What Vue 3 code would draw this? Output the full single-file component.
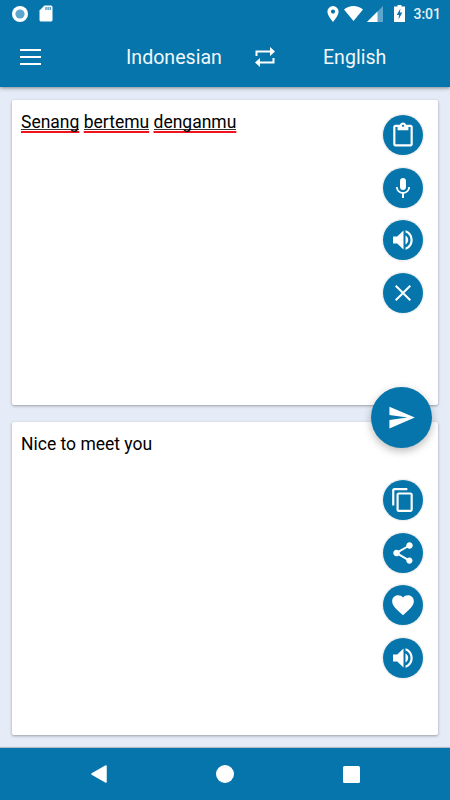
<template>
  <div class="screen">
    <header class="appbar">
      <div class="status">
        <div class="status-left">
          <svg class="rec" width="16" height="16" viewBox="0 0 16 16">
            <circle cx="8" cy="8" r="8" fill="#fff" />
            <circle cx="8" cy="8" r="4.6" fill="#5da6cc" />
          </svg>
          <svg width="14" height="17" viewBox="0 0 14 17">
            <path d="M5.500 0.500H12a1.500 1.500 0 0 1 1.500 1.500v13a1.500 1.500 0 0 1-1.500 1.500H2A1.500 1.500 0 0 1 .5 15V5.500z" fill="#fff" />
            <path d="M6.500 2h1v3h-1zM8.600 2h1v3h-1zM10.700 2h1v3h-1z" fill="#0575ab" />
          </svg>
        </div>
        <div class="status-right">
          <svg width="12" height="16" viewBox="0 0 12 16">
            <path d="M6 0a5.600 5.600 0 0 0-5.600 5.600C.4 9.800 6 16 6 16s5.600-6.200 5.600-10.400A5.600 5.600 0 0 0 6 0zm0 7.700a2.100 2.100 0 1 1 0-4.200 2.100 2.100 0 0 1 0 4.200z" fill="#fff" />
          </svg>
          <svg class="wifi" width="19" height="15" viewBox="0 0 19 15">
            <path d="M9.500 15L0 3.600C2.600 1.400 5.900 0 9.500 0s6.900 1.400 9.500 3.600z" fill="#fff" />
          </svg>
          <svg class="signal" width="16" height="16" viewBox="0 0 16 16">
            <path d="M0 16L16 0v16z" fill="#5da6cc" />
            <path d="M0 16L10.500 5.500V16z" fill="#fff" />
          </svg>
          <svg class="battery" width="11" height="17" viewBox="0 0 11 17">
            <path d="M3.500 0h4v1.500H11V17H0V1.500h3.500z" fill="#fff" />
            <path d="M6.400 3.600L2.800 10h2.300l-.6 4.400L8.300 7.600H5.900z" fill="#0575ab" />
          </svg>
          <span class="clock">3:01</span>
        </div>
      </div>
      <div class="toolbar">
        <svg class="menu" width="22" height="16" viewBox="0 0 22 16">
          <path d="M0 1h21M0 8h21M0 15h21" stroke="#fff" stroke-width="2" fill="none" />
        </svg>
        <span class="lang lang-from">Indonesian</span>
        <svg class="swap" width="20" height="22" viewBox="0 0 20 22">
          <path d="M1.500 10V5.500h14.500M18.500 12v4.500H4" stroke="#fff" stroke-width="2" fill="none" />
          <path d="M15 1l5 4.500-5 4.500zM5 12l-5 4.500 5 4.500z" fill="#fff" />
        </svg>
        <span class="lang lang-to">English</span>
      </div>
    </header>

    <main class="content">
      <section class="card card-source">
        <p class="text"><span class="misspelled">Senang</span> <span class="misspelled">bertemu</span> <span class="misspelled">denganmu</span></p>
        <div class="actions">
          <button v-for="b in sourceButtons" :key="b" class="round">
            <svg :width="sizes[b]" :height="sizes[b]" viewBox="0 0 24 24" v-html="icons[b]"></svg>
          </button>
        </div>
      </section>

      <section class="card card-target">
        <p class="text">Nice to meet you</p>
        <div class="actions">
          <button v-for="b in targetButtons" :key="b" class="round">
            <svg :width="sizes[b]" :height="sizes[b]" viewBox="0 0 24 24" v-html="icons[b]"></svg>
          </button>
        </div>
      </section>

      <button class="fab">
        <svg width="29" height="29" viewBox="0 0 24 24">
          <path d="M2.010 21L23 12 2.010 3 2 10l15 2-15 2z" fill="#fff" />
        </svg>
      </button>
    </main>

    <footer class="navbar">
      <svg width="18" height="20" viewBox="0 0 18 20">
        <path d="M16 2v16L2 10z" fill="#fff" stroke="#fff" stroke-width="1.500" stroke-linejoin="round" />
      </svg>
      <svg class="home" width="18" height="18" viewBox="0 0 18 18">
        <circle cx="9" cy="9" r="9" fill="#fff" />
      </svg>
      <svg width="17" height="17" viewBox="0 0 17 17">
        <rect width="17" height="17" rx="1.500" fill="#fff" />
      </svg>
    </footer>
  </div>
</template>

<script setup>
const sourceButtons = ['paste', 'mic', 'speaker', 'clear']
const targetButtons = ['copy', 'share', 'heart', 'speaker']

const sizes = { paste: 26, mic: 24, speaker: 24, clear: 24, copy: 26, share: 26, heart: 26 }

const icons = {
  paste: '<path fill="#fff" d="M19 2.500h-4.200C14.400 1.300 13.300.5 12 .5s-2.400.8-2.800 2H5c-1.100 0-2 .9-2 2v16c0 1.100.9 2 2 2h14c1.100 0 2-.9 2-2v-16c0-1.100-.9-2-2-2zm-7 0c.6 0 1 .4 1 1s-.4 1-1 1-1-.4-1-1 .4-1 1-1zm7 18H5v-16h2v3h10v-3h2z"/>',
  mic: '<path fill="#fff" d="M12 14c1.700 0 3-1.300 3-3V5c0-1.700-1.300-3-3-3S9 3.300 9 5v6c0 1.700 1.300 3 3 3zm5.300-3c0 3-2.500 5.100-5.300 5.100S6.700 14 6.700 11H5c0 3.400 2.700 6.200 6 6.700V22h2v-4.300c3.300-.5 6-3.300 6-6.700z"/>',
  speaker: '<path fill="#fff" d="M2 8.500v7h4.200l6.300 6V2.500l-6.300 6zM14.500 2.200v2.300c3 1 5 4 5 7.500s-2 6.500-5 7.500v2.300c4.200-1 7.200-5 7.200-9.800s-3-8.800-7.200-9.800zM14.500 7.500v9c1.600-.9 2.700-2.600 2.700-4.500s-1.100-3.600-2.700-4.500z"/>',
  clear: '<path fill="#fff" d="M20 5.400L18.600 4 12 10.600 5.400 4 4 5.400 10.600 12 4 18.600 5.400 20 12 13.400 18.600 20 20 18.600 13.400 12z"/>',
  copy: '<path fill="#fff" d="M16 1H4c-1.100 0-2 .9-2 2v14h2V3h12zm3 4H8c-1.100 0-2 .9-2 2v14c0 1.100.9 2 2 2h11c1.100 0 2-.9 2-2V7c0-1.100-.9-2-2-2zm0 16H8V7h11z"/>',
  share: '<path fill="#fff" d="M18 16.100c-.8 0-1.500.3-2 .8l-7.100-4.200c.1-.2.100-.5.100-.7s0-.5-.1-.7l7-4.100c.5.500 1.300.8 2.100.8 1.700 0 3-1.300 3-3s-1.300-3-3-3-3 1.300-3 3c0 .2 0 .5.100.7L8 9.800C7.500 9.300 6.800 9 6 9c-1.700 0-3 1.300-3 3s1.300 3 3 3c.8 0 1.500-.3 2-.8l7.100 4.200c-.1.200-.1.400-.1.600 0 1.600 1.300 2.900 2.900 2.900s2.900-1.300 2.900-2.900-1.200-2.900-2.800-2.900z"/>',
  heart: '<path fill="#fff" d="M12 21.400l-1.500-1.300C5.400 15.400 2 12.300 2 8.500 2 5.400 4.400 3 7.500 3c1.700 0 3.400.8 4.500 2.100C13.100 3.800 14.800 3 16.500 3 19.600 3 22 5.400 22 8.500c0 3.800-3.400 6.900-8.500 11.600z"/>'
}
</script>

<style>
html,
body {
  margin: 0;
  padding: 0;
}
</style>

<style scoped>
.screen {
  width: 450px;
  height: 800px;
  display: flex;
  flex-direction: column;
  background: #e6ecf7;
  font-family: Roboto, "Liberation Sans", sans-serif;
  overflow: hidden;
}

.appbar {
  height: 87px;
  background: #0575ab;
  color: #fff;
  box-shadow: 0 1px 4px rgba(0, 0, 0, 0.45);
  z-index: 2;
}

.status {
  height: 25px;
  display: flex;
  justify-content: space-between;
  align-items: center;
  padding: 1px 9px 0 12px;
}

.status-left {
  display: flex;
  align-items: center;
  gap: 11px;
}

.status-right {
  display: flex;
  align-items: center;
  gap: 5px;
}

.signal {
  margin-left: -1px;
}

.battery {
  margin-left: 6px;
}

.clock {
  font-size: 14px;
  font-weight: 500;
  margin-left: 3px;
  color: #e8f2f7;
}

.toolbar {
  height: 62px;
  display: flex;
  align-items: center;
  padding-left: 20px;
}

.menu {
  margin-right: 84px;
}

.lang {
  font-size: 19.6px;
  color: #f2f7fa;
}

.swap {
  margin-left: 33px;
  margin-right: 48px;
}

.content {
  flex: 1;
  position: relative;
  display: flex;
  flex-direction: column;
  gap: 17px;
  padding: 13px 12px;
}

.card {
  background: #fff;
  border-radius: 2px;
  box-shadow: 0 1px 3px rgba(0, 0, 0, 0.35);
  display: flex;
  justify-content: space-between;
  padding: 9px 15px 0 9px;
}

.card-source {
  height: 305px;
  box-sizing: border-box;
}

.card-target {
  height: 313px;
  box-sizing: border-box;
}

.text {
  margin: 0;
  font-size: 17.5px;
  line-height: 26px;
  color: #000;
}

.misspelled {
  text-decoration: underline #f0141e 2px;
  text-decoration-skip-ink: none;
  text-underline-offset: 3px;
  background: linear-gradient(#333, #333) left 0 bottom 2px / 100% 1px no-repeat;
}

.actions {
  display: flex;
  flex-direction: column;
  gap: 12.500px;
  padding-top: 6px;
}

.card-target .actions {
  padding-top: 49px;
}

.round {
  width: 40px;
  height: 40px;
  padding: 0;
  border: none;
  border-radius: 50%;
  background: #0575ab;
  box-shadow: 0 0 0 1.500px #f0f0f0;
  display: flex;
  align-items: center;
  justify-content: center;
}

.fab {
  position: absolute;
  right: 18px;
  top: 300px;
  width: 61px;
  height: 61px;
  padding: 0;
  border: none;
  border-radius: 50%;
  background: #0575ab;
  box-shadow: 0 3px 8px rgba(0, 0, 0, 0.28);
  display: flex;
  align-items: center;
  justify-content: center;
}

.navbar {
  height: 52px;
  background: #0575ab;
  display: flex;
  align-items: center;
  justify-content: space-between;
  padding: 0 90px;
  box-shadow: 0 -1px 1px rgba(0, 0, 0, 0.2);
}

.home {
  margin-right: 2px;
}
</style>
